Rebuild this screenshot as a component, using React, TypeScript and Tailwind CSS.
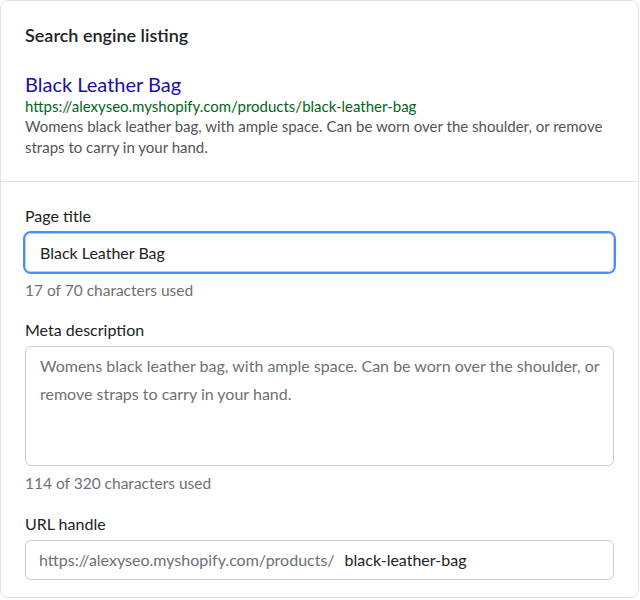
import { useState } from "react";

const FONT = "font-['Lato','Liberation_Sans',sans-serif]";

export default function App() {
  const [title, setTitle] = useState("Black Leather Bag");
  const [handle, setHandle] = useState("black-leather-bag");
  const description =
    "Womens black leather bag, with ample space. Can be worn over the shoulder, or remove straps to carry in your hand.";

  return (
    <div className={`${FONT} bg-white w-[640px] h-[600px] text-[#202223]`}>
      <div className="w-[639px] h-[598px] rounded-lg border border-[#e1e3e5] bg-white">
        <div className="px-6 pt-[22px] pb-[23px] border-b border-[#e1e3e5]">
          <h2 className="text-[18px] leading-6 font-semibold">Search engine listing</h2>
          <div className="mt-[25px]">
            <p className="text-[20px] leading-6 text-[#1a0dab]">{title}</p>
            <p className="text-[15px] leading-5 text-[#006621]">
              https://alexyseo.myshopify.com/products/{handle}
            </p>
            <p className="text-[15px] leading-[21px] text-[#545454]">{description}</p>
          </div>
        </div>

        <div className="px-6 pt-[24px]">
          <label className="block text-[16px] leading-5 mb-[7px]">Page title</label>
          <div className="rounded-md ring-2 ring-[#458fff]">
            <input
              value={title}
              onChange={(e) => setTitle(e.target.value)}
              className="block w-full h-[39px] rounded-md border border-[#c9cccf] px-[14px] text-[16px] outline-none"
            />
          </div>
          <p className="mt-[8px] text-[15.5px] leading-5 text-[#6d7175]">17 of 70 characters used</p>

          <label className="block mt-[20px] text-[16px] leading-5 mb-[6px]">Meta description</label>
          <textarea
            placeholder={description}
            className="block w-full h-[120px] resize-none rounded-md border border-[#c9cccf] pl-[14px] pr-[8px] pt-[5px] text-[16px] leading-[28px] placeholder:text-[#6d7175] outline-none"
          />
          <p className="mt-[7px] text-[15.5px] leading-5 text-[#6d7175]">114 of 320 characters used</p>

          <label className="block mt-[21px] text-[16px] leading-5 mb-[6px]">URL handle</label>
          <div className="flex items-center h-[40px] rounded-md border border-[#c9cccf] px-[13px] text-[16px]">
            <span className="text-[#6d7175]">https://alexyseo.myshopify.com/products/</span>
            <input
              value={handle}
              onChange={(e) => setHandle(e.target.value)}
              className="flex-1 ml-[10px] outline-none bg-transparent"
            />
          </div>
        </div>
      </div>
    </div>
  );
}
